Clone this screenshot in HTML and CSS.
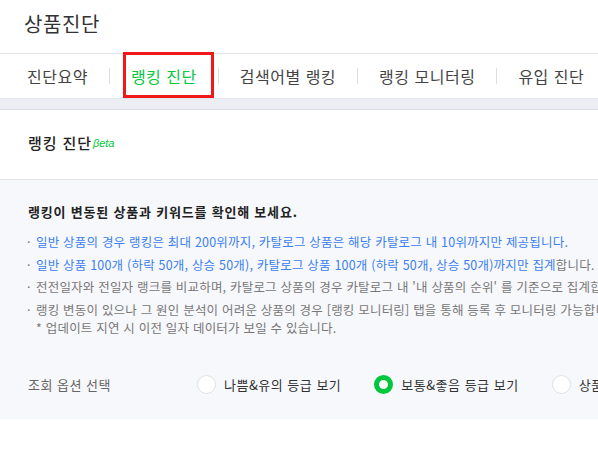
FILE: index.html
```html
<!DOCTYPE html>
<html lang="ko">
<head>
<meta charset="utf-8">
<title>상품진단</title>
<link rel="stylesheet" href="styles.css">
</head>
<body>
<div class="page">
  <header class="top">
    <h1 class="title">상품진단</h1>
  </header>
  <nav class="tabs">
    <a class="tab">진단요약</a>
    <span class="sep"></span>
    <a class="tab active">랭킹 진단</a>
    <span class="sep"></span>
    <a class="tab">검색어별 랭킹</a>
    <span class="sep"></span>
    <a class="tab">랭킹 모니터링</a>
    <span class="sep"></span>
    <a class="tab">유입 진단</a>
  </nav>
  <div class="gap"></div>
  <section class="panel">
    <div class="panel-head">
      <h2 class="panel-title">랭킹 진단<span class="beta">βeta</span></h2>
    </div>
    <div class="panel-body">
      <p class="lead">랭킹이 변동된 상품과 키워드를 확인해 보세요.</p>
      <ul class="notes">
        <li><span class="blue">일반 상품의 경우 랭킹은 최대 200위까지, 카탈로그 상품은 해당 카탈로그 내 10위까지만 제공됩니다.</span></li>
        <li><span class="blue">일반 상품 100개 (하락 50개, 상승 50개), 카탈로그 상품 100개 (하락 50개, 상승 50개)까지만 집계</span>합니다.</li>
        <li>전전일자와 전일자 랭크를 비교하며, 카탈로그 상품의 경우 카탈로그 내 '내 상품의 순위' 를 기준으로 집계합니다.</li>
        <li>랭킹 변동이 있으나 그 원인 분석이 어려운 상품의 경우 [랭킹 모니터링] 탭을 통해 등록 후 모니터링 가능합니다.<br>* 업데이트 지연 시 이전 일자 데이터가 보일 수 있습니다.</li>
      </ul>
      <div class="options">
        <span class="options-label">조회 옵션 선택</span>
        <label class="radio"><span class="circle"></span>나쁨&amp;유의 등급 보기</label>
        <label class="radio"><span class="circle checked"></span>보통&amp;좋음 등급 보기</label>
        <label class="radio"><span class="circle"></span>상품별 등급 보기</label>
      </div>
    </div>
  </section>
</div>
</body>
</html>
```
FILE: styles.css
```css
html, body {
  margin: 0;
  padding: 0;
  background: #fff;
}
body {
  width: 598px;
  overflow: hidden;
  font-family: "Noto Sans CJK KR", "Noto Sans", sans-serif;
  color: #333;
}
.page {
  width: 598px;
  overflow: hidden;
}
.top {
  height: 54px;
  box-sizing: border-box;
  padding: 9px 0 0 24px;
  border-bottom: 1px solid #dfe2e7;
}
.title {
  margin: 0;
  font-size: 20px;
  font-weight: 400;
  line-height: 30px;
  color: #333;
  letter-spacing: 0.6px;
}
.tabs {
  display: flex;
  align-items: center;
  height: 44px;
  padding-left: 6px;
  border-bottom: 1px solid #e3e6eb;
  white-space: nowrap;
}
.tab {
  position: relative;
  display: flex;
  align-items: center;
  height: 100%;
  padding: 0 21px;
  font-size: 16px;
  letter-spacing: 0.5px;
  color: #444;
  flex-shrink: 0;
}
.tab.active {
  color: #00c73c;
}
.tab.active::after {
  content: "";
  position: absolute;
  left: 13px;
  right: 4px;
  top: -2px;
  bottom: 0;
  border: 3px solid #f01818;
}
.sep {
  width: 1px;
  height: 16px;
  background: #dcdfe4;
  flex-shrink: 0;
}
.gap {
  height: 10px;
  background: #eceef3;
}
.panel {
  border-top: 1px solid #dcdfe5;
}
.panel-head {
  height: 70px;
  box-sizing: border-box;
  display: flex;
  align-items: center;
  padding: 0 0 5px 28px;
  border-bottom: 1px solid #e2e5ea;
}
.panel-title {
  margin: 0;
  font-size: 15px;
  font-weight: 500;
  letter-spacing: 0.9px;
  color: #222;
}
.beta {
  font-family: "Liberation Sans", sans-serif;
  font-style: italic;
  font-size: 11px;
  letter-spacing: 0;
  color: #00c73c;
  vertical-align: 2px;
  margin-left: 1px;
}
.panel-body {
  background: #f7f8fc;
  padding: 22px 0 24px 28px;
  white-space: nowrap;
}
.lead {
  margin: 0;
  font-size: 13px;
  font-weight: 700;
  line-height: 20px;
  letter-spacing: 0.8px;
  color: #222;
}
.notes {
  list-style: none;
  margin: 11px 0 0;
  padding: 0;
}
.notes li {
  position: relative;
  padding-left: 8px;
  margin-bottom: 4.5px;
  font-size: 12.5px;
  letter-spacing: 0.2px;
  line-height: 18px;
  color: #777;
}
.notes li::before {
  content: "·";
  position: absolute;
  left: -1px;
  top: 0;
  color: #777;
}
.blue {
  color: #3b80ee;
}
.options {
  display: flex;
  align-items: center;
  margin-top: 38px;
  height: 20px;
  font-size: 13px;
  letter-spacing: 0.5px;
}
.options-label {
  width: 169px;
  flex-shrink: 0;
  color: #666;
}
.radio {
  display: flex;
  align-items: center;
  margin-right: 33px;
  color: #333;
  flex-shrink: 0;
}
.circle {
  width: 19px;
  height: 19px;
  box-sizing: border-box;
  border-radius: 50%;
  border: 1px solid #e0e2e6;
  background: #fff;
  margin-right: 8px;
}
.circle.checked {
  border: 5px solid #00c73c;
}
```
